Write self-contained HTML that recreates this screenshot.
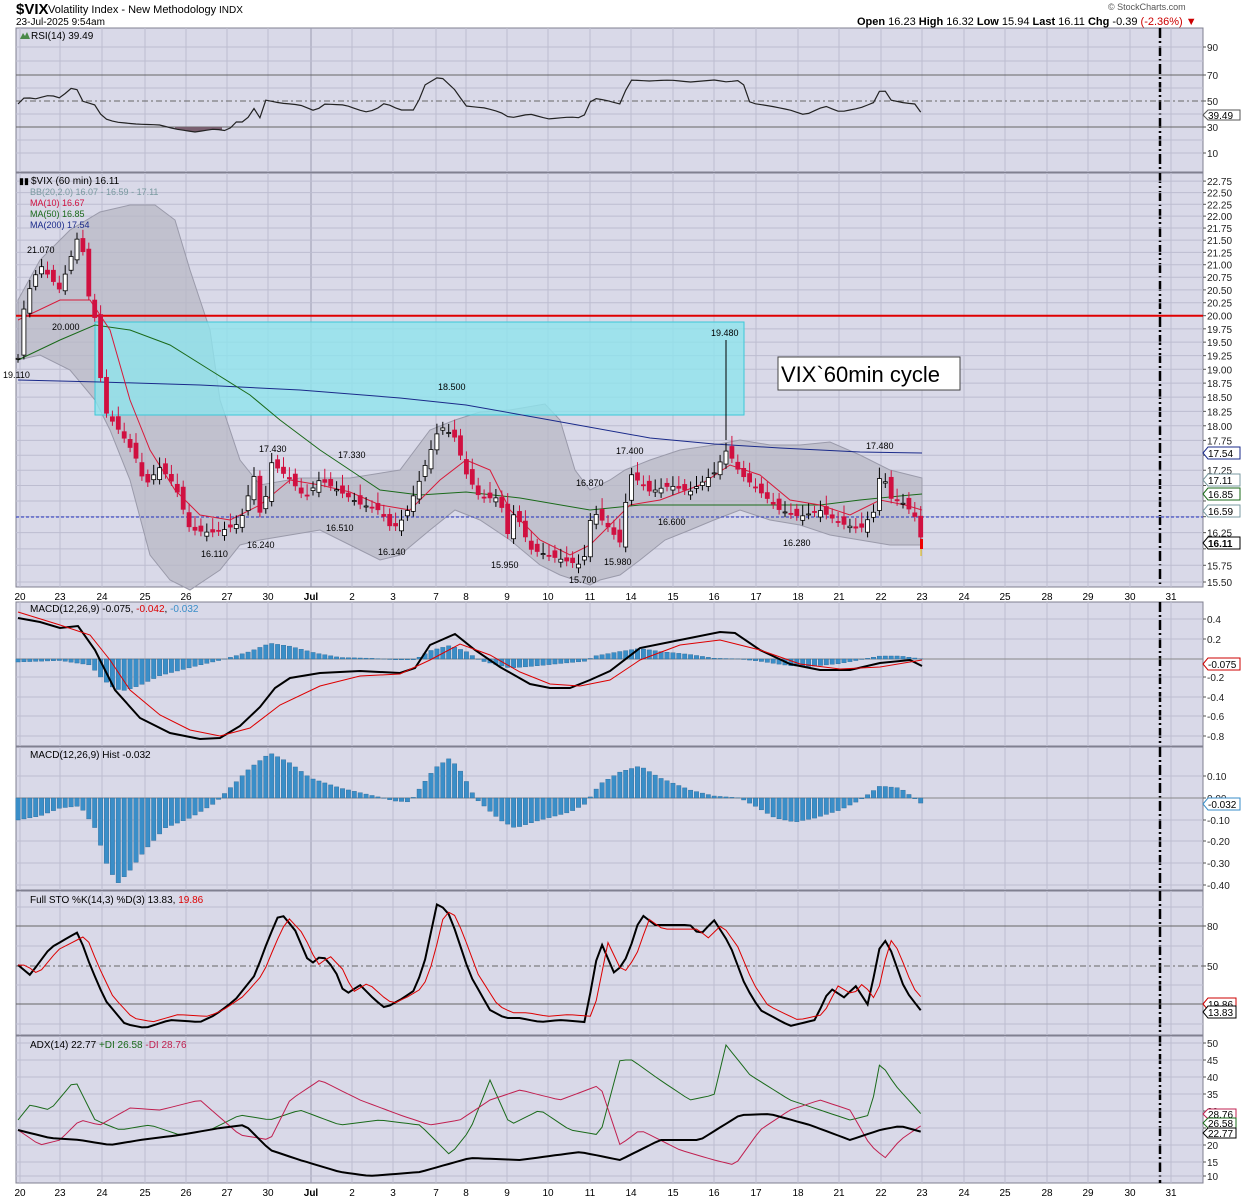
<!DOCTYPE html>
<html><head><meta charset="utf-8"><style>
html,body{margin:0;padding:0;background:#fff;width:1250px;height:1200px;overflow:hidden}
svg{display:block;font-family:"Liberation Sans",sans-serif}
</style></head><body>
<svg id="s" width="1250" height="1200" xmlns="http://www.w3.org/2000/svg"></svg>
<script>
const S=document.getElementById('s');let h='';
const L=16,R=1203;
const dates=[[20,'20'],[60,'23'],[102,'24'],[145,'25'],[186,'26'],[227,'27'],[268,'30'],[311,'Jul'],[352,'2'],[393,'3'],[436,'7'],[466,'8'],[507,'9'],[548,'10'],[590,'11'],[631,'14'],[673,'15'],[714,'16'],[756,'17'],[798,'18'],[839,'21'],[881,'22'],[922,'23'],[964,'24'],[1005,'25'],[1047,'28'],[1088,'29'],[1130,'30'],[1171,'31']];
const panels=[[28,172],[173,587],[602,746],[747,890],[891,1035],[1036,1183]];
h+=`<text x="16" y="14" font-size="15" font-weight="bold">$VIX</text><text x="48" y="13" font-size="11">Volatility Index - New Methodology</text><text x="219" y="13" font-size="10">INDX</text>`;
h+=`<text x="16" y="25" font-size="10">23-Jul-2025 9:54am</text>`;
h+=`<text x="1108" y="10" font-size="9" fill="#555">© StockCharts.com</text>`;
h+=`<text x="857" y="25" font-size="11"><tspan font-weight="bold">Open</tspan> 16.23 <tspan font-weight="bold">High</tspan> 16.32 <tspan font-weight="bold">Low</tspan> 15.94 <tspan font-weight="bold">Last</tspan> 16.11 <tspan font-weight="bold">Chg</tspan> -0.39 <tspan fill="#c00">(-2.36%)</tspan> <tspan fill="#c00">▼</tspan></text>`;
function P(pts,n){const out=[];for(let x=18;x<=922;x+=5.9){let i=0;while(i<pts.length-2&&pts[i+1][0]<x)i++;const a=pts[i],b=pts[i+1];const t=Math.max(0,Math.min(1,(x-a[0])/(b[0]-a[0])));out.push([x,a[1]+(b[1]-a[1])*t]);}return out;}
function poly(pts,c,w,extra=''){return `<polyline points="${pts.map(p=>p[0].toFixed(1)+','+p[1].toFixed(1)).join(' ')}" fill="none" stroke="${c}" stroke-width="${w}" ${extra}/>`;}
panels.forEach(([t,b])=>{h+=`<rect x="${L}" y="${t}" width="${R-L}" height="${b-t}" fill="#d9d9e8" stroke="#808090"/>`;
 dates.forEach(([x])=>{h+=`<line x1="${x}" y1="${t}" x2="${x}" y2="${b}" stroke="#bdbdd0"/>`});
 h+=`<line x1="311" y1="${t}" x2="311" y2="${b}" stroke="#9a9ab0"/>`;
 h+=`<line x1="1160" y1="${t}" x2="1160" y2="${b}" stroke="#000" stroke-width="2.5" stroke-dasharray="10,3,2,3"/>`;
});
function hl(y,lbl,c='#bdbdd0',dash=''){h+=`<line x1="${L}" y1="${y}" x2="${R}" y2="${y}" stroke="${c}" ${dash}/>`;if(lbl!==null)h+=`<text x="1207" y="${y+4}" font-size="10" fill="#222">${lbl}</text><line x1="${R}" y1="${y}" x2="${R+3}" y2="${y}" stroke="#555"/>`;}
[[47,'90'],[153,'10']].forEach(a=>hl(a[0],a[1]));
hl(75,'70','#666');hl(127,'30','#666');hl(101,'50','#666','stroke-dasharray="6,3,2,3"');
[61,88,114,140].forEach(y=>hl(y,null));
h+=`<text x="31" y="39" font-size="10">RSI(14) 39.49</text><path d="M20,39 l3,-6 l2,3 l2,-4 l3,7z" fill="#4a8a4a"/>`;
const rsi=P([[18,104],[25,97],[35,99],[50,95],[60,98],[75,85],[82,101],[95,105],[103,118],[115,122],[135,124],[160,125],[175,129],[195,132],[215,129],[228,131],[235,122],[245,122],[255,107],[260,118],[265,100],[280,103],[300,105],[315,111],[325,104],[345,105],[365,112],[375,110],[385,103],[400,110],[415,110],[425,85],[440,76],[455,90],[466,106],[485,108],[500,112],[510,118],[530,114],[548,119],[570,117],[583,118],[592,98],[605,100],[620,104],[630,80],[650,81],[670,80],[690,82],[714,80],[727,82],[742,80],[750,103],[770,106],[790,110],[805,115],[825,106],[840,112],[860,108],[875,102],[882,85],[890,100],[905,103],[915,104],[922,114]]);
h+=`<path d="M175,129 L195,132 L215,129 L222,130 L222,127 L175,127z" fill="#7a6070"/>`;
h+=poly(rsi,'#222',1.2);
h+=`<path d="M1203,115 l5,-5 h32 v10 h-32z" fill="#fff" stroke="#555"/><text x="1208" y="119" font-size="10">39.49</text>`;
const yp=p=>582-1044.8*(Math.log(p)-Math.log(15.5));
[22.75,22.5,22.25,22,21.75,21.5,21.25,21,20.75,20.5,20.25,20,19.75,19.5,19.25,19,18.75,18.5,18.25,18,17.75,17.5,17.25,17,16.75,16.5,16.25,16,15.75,15.5].forEach(p=>{const y=yp(p);h+=`<line x1="${L}" y1="${y}" x2="${R}" y2="${y}" stroke="#bdbdd0"/>`;if(![17,16.75,16.5,16].includes(p))h+=`<text x="1207" y="${y+4}" font-size="10" fill="#222">${p.toFixed(2)}</text>`;h+=`<line x1="${R}" y1="${y}" x2="${R+3}" y2="${y}" stroke="#555"/>`;});
const bbU=[[18,300],[40,260],[70,230],[100,212],[130,205],[155,205],[175,220],[190,270],[210,330],[220,400],[240,460],[260,485],[300,478],[350,478],[400,470],[430,430],[455,420],[480,412],[510,410],[545,404],[560,420],[575,470],[590,490],[610,480],[625,470],[650,460],[680,450],[714,445],[740,440],[770,445],[800,445],[830,442],[860,455],[890,470],[922,478]];
const bbL=[[922,545],[890,545],[860,540],[830,535],[800,525],[770,520],[740,510],[714,520],[690,530],[665,540],[640,560],[620,575],[600,580],[590,585],[560,575],[540,565],[510,540],[480,520],[455,510],[430,530],[400,555],[380,560],[350,545],[320,530],[290,535],[260,540],[240,545],[220,570],[190,590],[170,580],[150,555],[130,480],[110,430],[95,400],[70,370],[40,355],[18,360]];
h+=`<polygon points="${bbU.concat(bbL).map(p=>p.join(',')).join(' ')}" fill="#b8b8c6" fill-opacity="0.75" stroke="#9a9aaa"/>`;
h+=`<rect x="95" y="322" width="649" height="93" fill="#8fe3ec" fill-opacity="0.8" stroke="#3cc8d8"/>`;
h+=`<line x1="${L}" y1="${yp(20)}" x2="${R}" y2="${yp(20)}" stroke="#e00000" stroke-width="2"/>`;
h+=`<line x1="${L}" y1="517" x2="${R}" y2="517" stroke="#2030c0" stroke-dasharray="3,2"/>`;
h+=poly([[18,380],[100,382],[200,385],[300,390],[400,398],[466,405],[550,420],[650,438],[714,444],[780,448],[860,452],[922,453]],'#1a2a8a',1);
h+=poly([[18,360],[60,340],[95,325],[130,330],[170,345],[210,370],[250,395],[280,420],[320,450],[350,470],[380,490],[420,495],[466,492],[520,498],[590,510],[640,505],[700,505],[760,505],[820,505],[860,500],[900,496],[922,494]],'#1a6a1a',1);
h+=poly([[18,320],[60,300],[90,300],[110,330],[130,400],[150,450],[175,490],[200,515],[230,520],[260,505],[290,480],[320,485],[350,492],[380,505],[410,510],[440,480],[466,460],[490,470],[510,510],[540,540],[570,555],[590,545],[610,525],[630,505],[660,500],[700,485],[730,465],[760,475],[790,500],[820,505],[850,515],[880,500],[905,505],[922,510]],'#d81a3a',1);
const cl=P([[18,19.2],[25,20.3],[40,21],[60,20.5],[80,21.7],[90,20.2],[96,19.9],[103,18.3],[120,17.9],[135,17.5],[145,17],[160,17.3],[175,17],[190,16.3],[210,16.25],[225,16.3],[240,16.4],[255,17.2],[262,16.3],[270,17.4],[290,17.1],[305,16.8],[320,17.1],[340,16.9],[360,16.7],[380,16.6],[392,16.3],[405,16.5],[420,17.1],[440,18],[455,17.8],[466,17.2],[480,16.8],[500,16.8],[507,16.2],[515,16.6],[530,16],[548,15.9],[570,15.8],[583,15.75],[592,16.6],[605,16.4],[620,16.1],[630,17.2],[650,16.9],[670,17],[690,16.9],[714,17.2],[727,17.6],[740,17.2],[760,16.9],[780,16.6],[800,16.5],[820,16.6],[840,16.4],[860,16.3],[875,16.6],[881,17.3],[890,16.8],[905,16.7],[915,16.5],[922,16.11]]);
let prev=cl[0][1];
cl.forEach(([x,c],i)=>{const o=prev+(Math.sin(i*2.3)*0.08);const hi=Math.max(o,c)+0.08+Math.abs(Math.sin(i))*0.1,lo=Math.min(o,c)-0.08;const up=c>=o;const col=up?'#000':'#d01040';
 h+=`<line x1="${x}" y1="${yp(hi)}" x2="${x}" y2="${yp(lo)}" stroke="${col}"/>`;
 const t=yp(Math.max(o,c)),b=yp(Math.min(o,c));h+=`<rect x="${x-2}" y="${t}" width="4" height="${Math.max(1,b-t)}" fill="${up?'#fff':col}" stroke="${col}" stroke-width="0.8"/>`;prev=c;});
h+=`<line x1="726" y1="340" x2="726" y2="440" stroke="#000"/>`;
h+=`<rect x="920" y="539" width="3" height="10" fill="#e00"/><line x1="921" y1="549" x2="921" y2="556" stroke="#e8c000"/>`;
[[27,253,'21.070'],[52,330,'20.000'],[3,378,'19.110'],[438,390,'18.500'],[711,336,'19.480'],[259,452,'17.430'],[338,458,'17.330'],[616,454,'17.400'],[866,449,'17.480'],[576,486,'16.870'],[658,525,'16.600'],[326,531,'16.510'],[783,546,'16.280'],[201,557,'16.110'],[247,548,'16.240'],[378,555,'16.140'],[491,568,'15.950'],[604,565,'15.980'],[569,583,'15.700']].forEach(([x,y,t])=>{h+=`<text x="${x}" y="${y}" font-size="9">${t}</text>`});
h+=`<rect x="778" y="357" width="182" height="33" fill="#fff" stroke="#444"/><text x="781" y="382" font-size="22">VIX\`60min cycle</text>`;
h+=`<text x="31" y="184" font-size="10">$VIX (60 min) 16.11</text><text x="19" y="184" font-size="9">▮▮</text>`;
h+=`<text x="30" y="195" font-size="9" fill="#7a9aa0">BB(20,2.0) 16.07 - 16.59 - 17.11</text>`;
h+=`<text x="30" y="206" font-size="9" fill="#d01040">MA(10) 16.67</text><text x="30" y="217" font-size="9" fill="#1a6a1a">MA(50) 16.85</text><text x="30" y="228" font-size="9" fill="#1a2a8a">MA(200) 17.54</text>`;
[[453,'17.54','#1a2a8a',''],[480,'17.11','#7a9aa0',''],[494,'16.85','#1a6a1a',''],[511,'16.59','#7a9aa0',''],[543,'16.11','#000','bold']].forEach(([y,t,c,b])=>{h+=`<path d="M1203,${y} l5,-6 h32 v12 h-32z" fill="#fff" stroke="${c}"/><text x="1208" y="${y+4}" font-size="10" font-weight="${b}">${t}</text>`});
[[590,601],[1183,1197]].forEach(([t,b])=>{dates.forEach(([x,l])=>{h+=`<text x="${x}" y="${b-1}" font-size="10" text-anchor="middle" ${l=='Jul'?'font-weight="bold"':''}>${l}</text>`});});
[[619,'0.4'],[639,'0.2'],[677,'-0.2'],[697,'-0.4'],[716,'-0.6'],[736,'-0.8']].forEach(a=>hl(a[0],a[1]));hl(659,null,'#888');
const hist=[[18,-4],[60,-2],[90,-8],[102,-26],[115,-40],[125,-42],[140,-35],[160,-22],[180,-15],[200,-8],[225,0],[250,10],[270,21],[290,17],[315,8],[340,2],[370,1],[395,-1],[415,-1],[430,11],[450,18],[466,10],[480,-2],[510,-12],[530,-10],[560,-6],[585,-3],[595,4],[620,10],[640,14],[660,10],[690,6],[714,1],[740,0],[760,-3],[790,-9],[810,-10],[840,-6],[860,-1],[880,4],[900,4],[922,0]];
P(hist).forEach(([x,v])=>{const y0=659,y1=659-v*0.75;h+=`<rect x="${x-2.2}" y="${Math.min(y0,y1)}" width="4.4" height="${Math.abs(y1-y0)}" fill="#3a8ec8" stroke="#2a6a98" stroke-width="0.4"/>`});
h+=poly([[18,618],[40,622],[60,628],[78,626],[95,650],[115,690],[140,718],[170,733],[200,739],[220,738],[240,726],[260,707],[275,688],[290,678],[320,673],[360,671],[400,673],[415,668],[430,645],[455,634],[475,650],[500,667],[530,684],[550,688],[570,688],[590,680],[610,671],[640,648],[680,640],[720,632],[735,633],[760,650],[790,664],[820,670],[850,670],[880,663],[910,660],[922,666]],'#000',2);
h+=poly([[18,612],[60,625],[90,635],[110,660],[130,690],[160,715],[190,730],[220,736],[250,728],[280,705],[320,686],[360,676],[400,674],[430,660],[460,644],[490,655],[520,672],[550,684],[580,686],[610,680],[640,660],[680,645],[720,640],[760,650],[800,664],[840,669],[880,667],[922,660]],'#d00',1);
h+=`<text x="30" y="612" font-size="10">MACD(12,26,9) -0.075, <tspan fill="#d00">-0.042</tspan>, <tspan fill="#3a8ec8">-0.032</tspan></text>`;
h+=`<path d="M1203,664 l5,-6 h32 v12 h-32z" fill="#fff" stroke="#c00"/><text x="1208" y="668" font-size="10">-0.075</text>`;
[[776,'0.10'],[820,'-0.10'],[841,'-0.20'],[863,'-0.30'],[885,'-0.40']].forEach(a=>hl(a[0],a[1]));hl(798,'0.00','#888');
const hist2=[[18,-22],[40,-18],[60,-10],[80,-8],[95,-30],[108,-70],[118,-85],[128,-75],[145,-52],[165,-30],[190,-20],[215,-5],[230,10],[250,30],[270,45],[290,35],[310,20],[340,10],[370,3],[395,-3],[410,-4],[420,10],[435,30],[450,40],[462,25],[475,0],[500,-22],[515,-30],[540,-22],[570,-14],[585,-6],[600,14],[620,26],[640,32],[660,20],[690,8],[714,2],[740,0],[755,-8],[775,-20],[795,-24],[815,-20],[840,-12],[860,-2],[880,12],[900,10],[922,-6]];
P(hist2).forEach(([x,v])=>{const y1=798-v;h+=`<rect x="${x-2.2}" y="${Math.min(798,y1)}" width="4.4" height="${Math.abs(y1-798)}" fill="#3a8ec8" stroke="#2a6a98" stroke-width="0.4"/>`});
h+=`<text x="30" y="758" font-size="10">MACD(12,26,9) Hist -0.032</text>`;
h+=`<path d="M1203,804 l5,-6 h32 v12 h-32z" fill="#fff" stroke="#3a8ec8"/><text x="1208" y="808" font-size="10">-0.032</text>`;
hl(926,'80','#666');hl(1004,'20','#666');hl(966,'50','#666','stroke-dasharray="6,3,2,3"');[907,946,985,1024].forEach(y=>hl(y,null));
const kk=[[18,965],[30,975],[50,948],[78,932],[90,965],[105,1000],[125,1024],[145,1028],[170,1020],[200,1022],[215,1015],[235,1000],[255,975],[268,940],[280,912],[295,930],[310,965],[322,955],[335,970],[345,995],[360,985],[375,1000],[385,1008],[400,1000],[415,990],[425,960],[437,904],[447,910],[455,930],[470,975],[490,1010],[505,1018],[520,1018],[540,1022],[560,1020],[585,1022],[600,940],[615,975],[628,955],[641,914],[655,925],[670,925],[690,925],[700,935],[714,920],[730,945],[745,985],[760,1010],[790,1026],[815,1020],[830,988],[845,998],[855,985],[868,1005],[882,936],[890,948],[905,990],[922,1012]];
h+=poly(P(kk),'#000',2);
h+=poly(P(kk.map(([x,y])=>[x+8,y*0.9+966*0.1])),'#d00',1);
h+=`<text x="30" y="903" font-size="10">Full STO %K(14,3) %D(3) 13.83, <tspan fill="#d00">19.86</tspan></text>`;
h+=`<path d="M1203,1004 l5,-6 h28 v12 h-28z" fill="#fff" stroke="#c00"/><text x="1208" y="1008" font-size="10">19.86</text><path d="M1203,1012 l5,-6 h28 v12 h-28z" fill="#fff" stroke="#000"/><text x="1208" y="1016" font-size="10">13.83</text>`;
[[1043,'50'],[1060,'45'],[1077,'40'],[1094,'35'],[1111,'30'],[1128,'25'],[1145,'20'],[1162,'15'],[1176,'10']].forEach(a=>hl(a[0],a[1]));
h+=poly(P([[18,1120],[30,1105],[50,1110],[75,1080],[95,1120],[120,1130],[150,1125],[180,1135],[210,1130],[240,1115],[270,1120],[300,1110],[340,1125],[380,1120],[420,1125],[450,1155],[470,1130],[490,1080],[510,1125],[540,1110],[570,1130],[600,1135],[620,1060],[632,1060],[660,1080],[690,1100],[714,1095],[726,1045],[750,1075],[790,1100],[820,1110],[850,1120],[870,1115],[880,1062],[895,1085],[922,1115]]),'#1a6a1a',1);
h+=poly(P([[18,1130],[40,1145],[60,1140],[80,1120],[100,1125],[130,1108],[160,1110],[200,1100],[240,1135],[270,1140],[290,1100],[320,1080],[360,1100],[400,1115],[430,1125],[460,1120],[490,1100],[520,1090],[560,1100],[600,1085],[620,1145],[640,1130],[680,1150],[714,1160],[735,1165],[760,1130],[790,1110],[820,1100],[850,1110],[870,1145],[885,1158],[900,1140],[922,1125]]),'#c02050',1);
h+=poly(P([[18,1130],[50,1138],[80,1140],[110,1145],[140,1140],[180,1135],[220,1128],[245,1125],[270,1150],[300,1160],[340,1172],[370,1176],[420,1172],[470,1158],[520,1160],[580,1152],[620,1160],[660,1140],[700,1140],[740,1115],[770,1114],[810,1125],[850,1140],[880,1130],[900,1126],[922,1132]]),'#000',2);
h+=`<text x="30" y="1048" font-size="10">ADX(14) 22.77 <tspan fill="#1a6a1a">+DI 26.58</tspan> <tspan fill="#c02050">-DI 28.76</tspan></text>`;
[[1114,'28.76','#c02050'],[1123,'26.58','#1a6a1a'],[1133,'22.77','#000']].forEach(([y,t,c])=>{h+=`<path d="M1203,${y} l5,-5 h28 v10 h-28z" fill="#fff" stroke="${c}"/><text x="1208" y="${y+4}" font-size="10">${t}</text>`});
S.innerHTML=h;
</script>
</body></html>
